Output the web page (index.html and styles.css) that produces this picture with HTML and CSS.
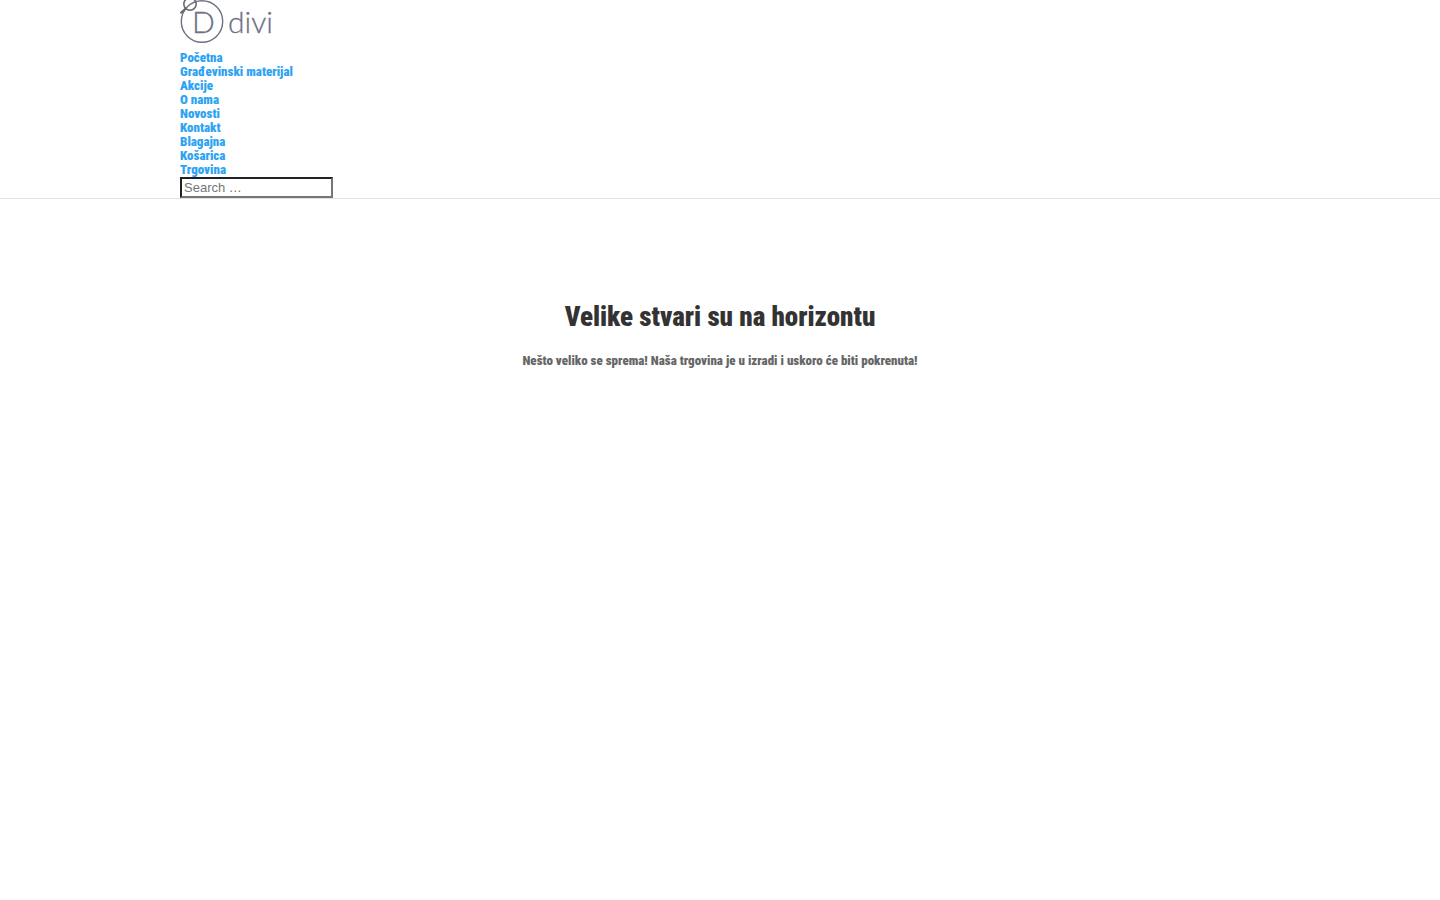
FILE: index.html
```html
<!DOCTYPE html>
<html lang="hr">
<head>
<meta charset="utf-8">
<title>Velike stvari su na horizontu</title>
<link rel="stylesheet" href="styles.css">
</head>
<body>
<header class="header">
  <div class="container">
    <a class="logo" href="#" aria-label="divi">
      <svg width="94" height="44" viewBox="0 0 94 44">
        <g fill="none" stroke="#6d7087" stroke-width="1.4">
          <circle cx="22" cy="21.5" r="20.7"/>
        </g>
        <g class="logo-text">
          <text x="12" y="33" font-size="30">D</text>
          <text x="48" y="33" font-size="30">divi</text>
        </g>
        <g fill="none" stroke="#666" stroke-width="1.5">
          <circle cx="10" cy="4" r="6.2"/>
          <path d="M5.7 8.5L.5 13.2" stroke-width="2"/>
        </g>
      </svg>
    </a>
    <nav>
      <ul class="menu">
        <li><a href="#">Početna</a></li>
        <li><a href="#">Građevinski materijal</a></li>
        <li><a href="#">Akcije</a></li>
        <li><a href="#">O nama</a></li>
        <li><a href="#">Novosti</a></li>
        <li><a href="#">Kontakt</a></li>
        <li><a href="#">Blagajna</a></li>
        <li><a href="#">Košarica</a></li>
        <li><a href="#">Trgovina</a></li>
      </ul>
    </nav>
    <form role="search"><input class="search" type="search" placeholder="Search …" aria-label="Search"></form>
  </div>
</header>
<main class="notice">
  <h1>Velike stvari su na horizontu</h1>
  <p>Nešto veliko se sprema! Naša trgovina je u izradi i uskoro će biti pokrenuta!</p>
</main>
</body>
</html>
```
FILE: styles.css
```css
* { box-sizing: border-box; }
body {
  margin: 0;
  background: #fff;
  color: #666;
  font: 900 13px/14px "Roboto Condensed", "Liberation Sans Narrow", "Liberation Sans", sans-serif;
}
.header { border-bottom: 1px solid #e2e2e2; }
.container { width: 75%; max-width: 1080px; margin: 0 auto; }
.logo { display: block; height: 51px; }
.logo svg { display: block; }
.logo-text {
  font-family: Lato, sans-serif;
  font-weight: 300;
  fill: #6d7087;
  stroke: #6d7087;
  stroke-width: 0.3px;
}
.menu { list-style: none; margin: 0; padding: 0; }
.menu a { color: #2ea3f2; text-decoration: none; }
.search {
  display: block;
  width: 153px;
  height: 21px;
  margin: 0;
  padding: 1px 2px;
  border: 2px inset #767676;
  background: #fff;
  font: 13px "Liberation Sans", sans-serif;
}
.search::placeholder { color: #757575; }
.notice { padding: 103px 24px 0; text-align: center; }
.notice h1 {
  margin: 0;
  padding-bottom: 22px;
  color: #333;
  font-size: 27px;
  font-weight: 900;
  line-height: 30px;
}
.notice p { margin: 0; }
```
